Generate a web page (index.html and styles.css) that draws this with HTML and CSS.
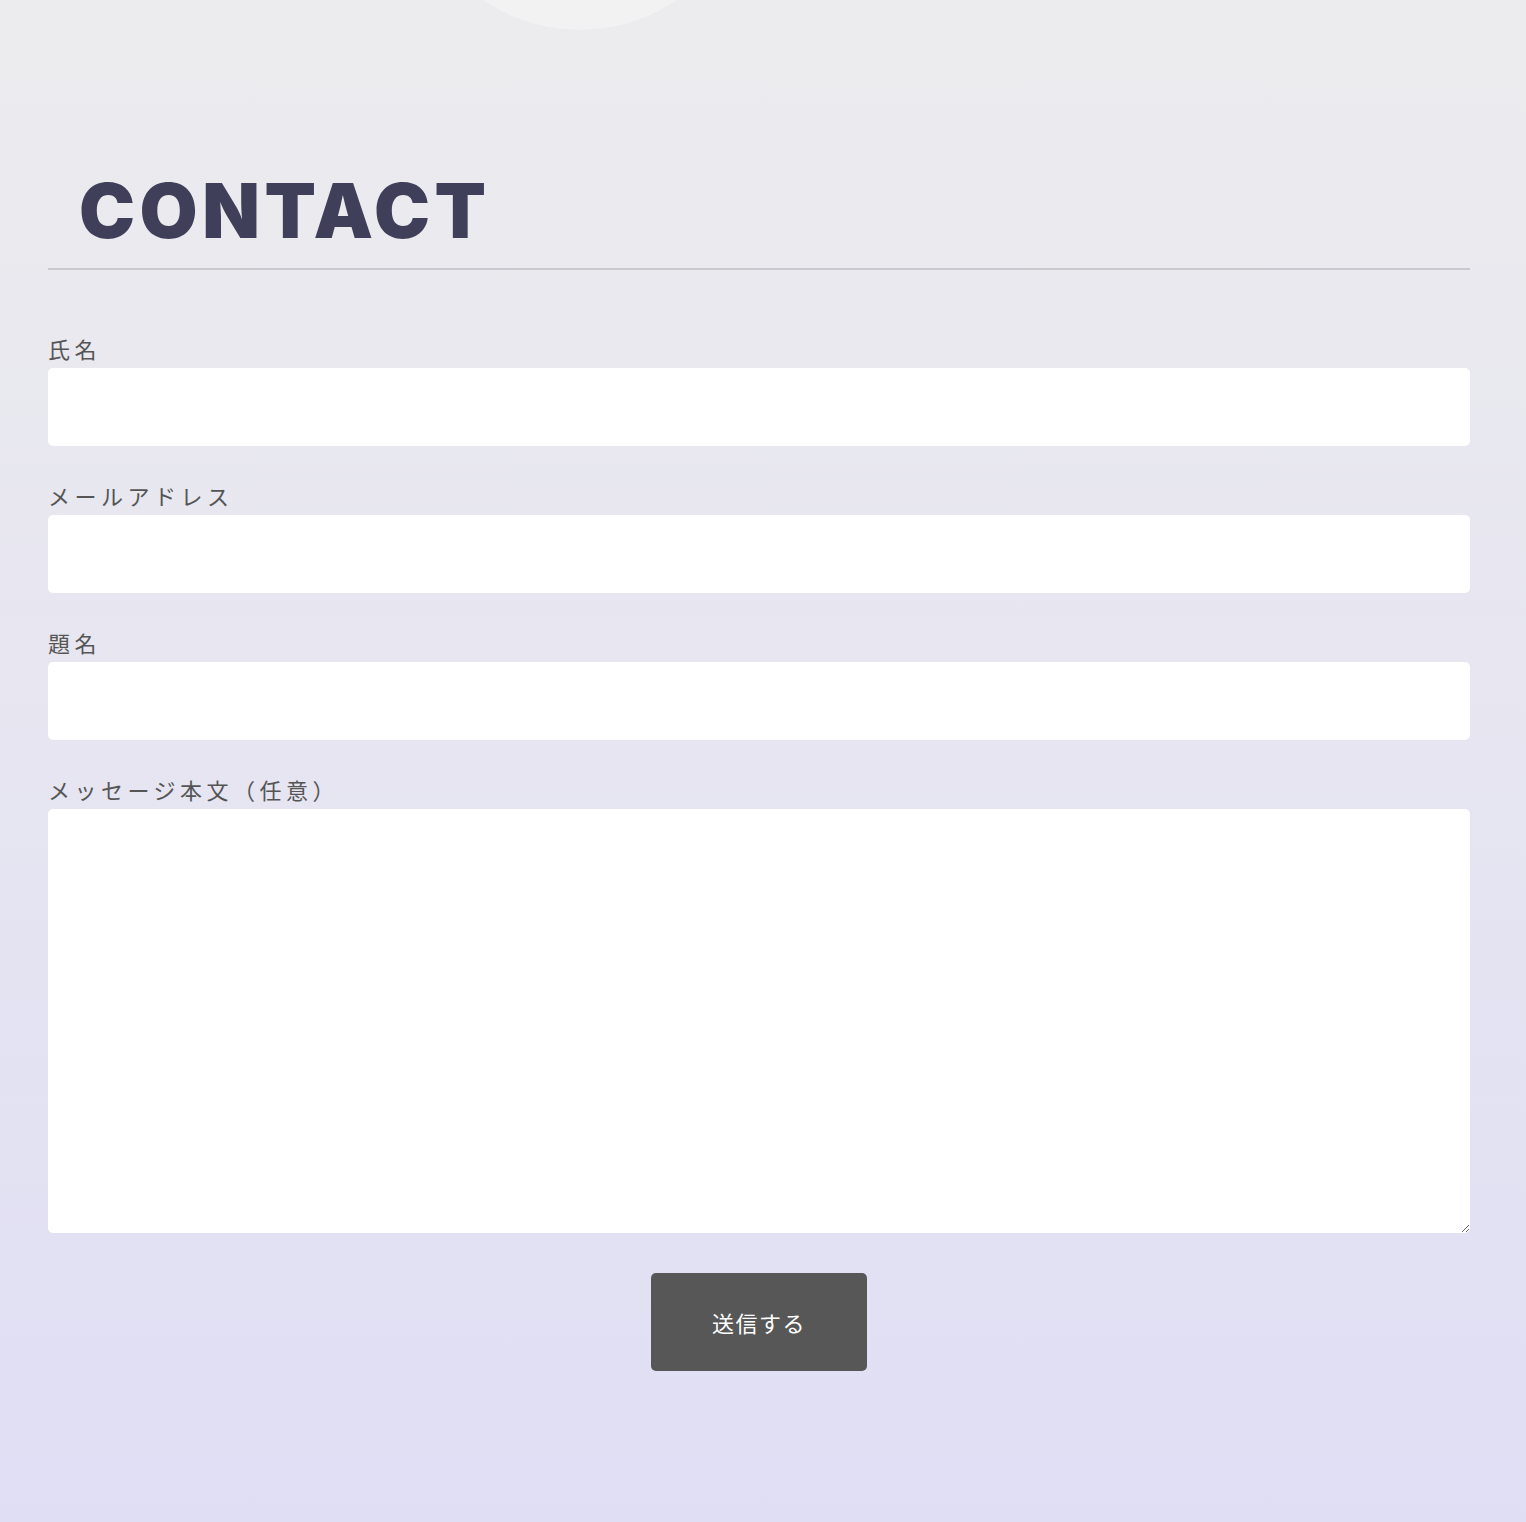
FILE: index.html
```html
<!DOCTYPE html>
<html lang="ja">
<head>
<meta charset="utf-8">
<title>Contact</title>
<link rel="stylesheet" href="styles.css">
</head>
<body>
<div class="deco-circle"></div>
<main class="page">
  <section class="contact">
    <h1 class="contact-title">CONTACT</h1>
    <form class="form">
      <div class="field">
        <label class="label" for="name">氏名</label>
        <input class="input" id="name" type="text">
      </div>
      <div class="field">
        <label class="label" for="email">メールアドレス</label>
        <input class="input" id="email" type="email">
      </div>
      <div class="field">
        <label class="label" for="subject">題名</label>
        <input class="input" id="subject" type="text">
      </div>
      <div class="field">
        <label class="label" for="message">メッセージ本文（任意）</label>
        <textarea class="textarea" id="message"></textarea>
      </div>
      <div class="actions">
        <button class="submit" type="button">送信する</button>
      </div>
    </form>
  </section>
</main>
</body>
</html>
```
FILE: styles.css
```css
html, body {
  margin: 0;
  padding: 0;
}
body {
  min-height: 1522px;
  background: linear-gradient(180deg, #ececee 0%, #e0def4 100%);
  font-family: "Noto Sans CJK JP", "Noto Sans", sans-serif;
  color: #555;
  position: relative;
  overflow: hidden;
}
.deco-circle {
  position: absolute;
  top: -314px;
  left: 408px;
  width: 344px;
  height: 344px;
  border-radius: 50%;
  background: rgba(255, 255, 255, 0.3);
}
.page {
  padding: 170px 56px 0 48px;
}
.contact-title {
  margin: 0;
  padding: 0 0 16px 31px;
  font-family: Inter, "Liberation Sans", Arial, sans-serif;
  font-weight: 900;
  font-size: 75px;
  line-height: 82px;
  letter-spacing: 4.5px;
  color: #3f3f5a;
  border-bottom: 2px solid #c8cad0;
}
.form {
  display: flex;
  flex-direction: column;
  gap: 33px;
  padding-top: 62px;
}
.field {
  display: flex;
  flex-direction: column;
  gap: 4px;
}
.label {
  font-size: 22px;
  line-height: 32px;
  letter-spacing: 4.5px;
  color: #555;
}
.input, .textarea {
  display: block;
  box-sizing: border-box;
  width: 100%;
  border: none;
  border-radius: 5px;
  background: #fff;
  font: inherit;
  outline: none;
}
.input {
  height: 78px;
}
.textarea {
  height: 424px;
  resize: vertical;
}
.actions {
  display: flex;
  justify-content: center;
  padding-top: 7px;
}
.submit {
  width: 216px;
  height: 98px;
  border: none;
  border-radius: 5px;
  background: #575757;
  color: #fff;
  font-family: "Noto Sans CJK JP", "Noto Sans", sans-serif;
  font-size: 22px;
  letter-spacing: 1.5px;
}
```
